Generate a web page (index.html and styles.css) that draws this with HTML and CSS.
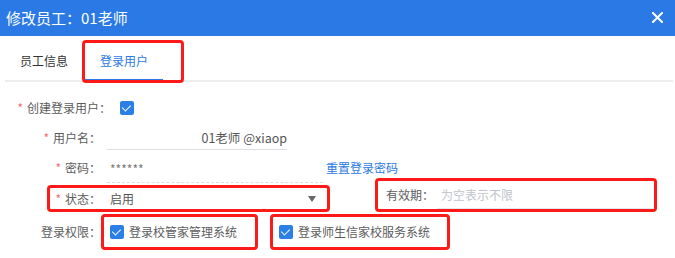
FILE: index.html
```html
<!DOCTYPE html>
<html lang="zh-CN">
<head>
    <meta charset="UTF-8">
    <meta name="viewport" content="width=device-width, initial-scale=1.0">
    <title>修改员工</title>
    <link rel="stylesheet" href="styles.css">
</head>
<body>
    <div class="dialog">
        <div class="dialog-header">
            <span class="dialog-title">修改员工：01老师</span>
            <span class="dialog-close">
                <svg width="11" height="11" viewBox="0 0 11 11">
                    <path d="M1 1L10 10M10 1L1 10" stroke="#ffffff" stroke-width="2" stroke-linecap="square"/>
                </svg>
            </span>
        </div>

        <div class="tabs">
            <div class="tab">员工信息</div>
            <div class="tab tab-active">登录用户</div>
            <div class="mark mark-tab"></div>
        </div>

        <div class="form">
            <div class="row row-create">
                <label class="label label-wide required">创建登录用户：</label>
                <span class="checkbox"></span>
            </div>

            <div class="row row-name">
                <label class="label required">用户名：</label>
                <div class="input input-name">01老师 @xiaop</div>
            </div>

            <div class="row row-pass">
                <label class="label required">密码：</label>
                <div class="input input-pass">******</div>
                <a class="link" href="#">重置登录密码</a>
            </div>

            <div class="row row-status">
                <div class="box box-status">
                    <label class="label label-status required">状态：</label>
                    <div class="select">
                        <span>启用</span>
                        <span class="caret"></span>
                    </div>
                </div>
                <div class="box box-expire">
                    <label class="label label-expire">有效期：</label>
                    <div class="input input-expire">为空表示不限</div>
                </div>
            </div>

            <div class="row row-perm">
                <label class="label">登录权限：</label>
                <div class="box box-check box-check-1">
                    <span class="checkbox"></span>
                    <span class="check-text">登录校管家管理系统</span>
                </div>
                <div class="box box-check box-check-2">
                    <span class="checkbox"></span>
                    <span class="check-text">登录师生信家校服务系统</span>
                </div>
            </div>
        </div>
    </div>
</body>
</html>
```

FILE: styles.css
```css
* {
    margin: 0;
    padding: 0;
    box-sizing: border-box;
}

body {
    font-family: "Noto Sans CJK SC", "Noto Sans", sans-serif;
    background: #ffffff;
    color: #5c5c5c;
    font-size: 12px;
}

.dialog {
    width: 675px;
    height: 258px;
    overflow: hidden;
}

.dialog-header {
    height: 36px;
    background: #2a79e4;
    display: flex;
    align-items: center;
    justify-content: space-between;
    padding: 0 12px 0 6px;
}

.dialog-title {
    color: #ffffff;
    font-size: 15px;
    line-height: 20px;
}

.dialog-close {
    display: flex;
    margin-top: -2px;
}

.tabs {
    position: relative;
    display: flex;
    gap: 2px;
    margin: 0 2px 0 5px;
    border-bottom: 2px solid #eeeeee;
}

.tab {
    padding: 15px 15px 9px;
    line-height: 20px;
    color: #333333;
    font-size: 12px;
}

.tab-active {
    color: #2a79e4;
    box-shadow: inset 0 -2px 0 #2a79e4;
    margin-bottom: -1px;
}

.mark {
    position: absolute;
    border: 3px solid #ff1a1a;
    border-radius: 4px;
}

.mark-tab {
    left: 77px;
    top: 4px;
    width: 102px;
    height: 43px;
}

.form {
    padding-top: 13px;
}

.row {
    display: flex;
    align-items: center;
}

.label {
    width: 101px;
    text-align: right;
    line-height: 20px;
    white-space: nowrap;
    color: #5c5c5c;
}

.required::before {
    content: "*";
    color: #f56c6c;
    margin-right: 4px;
}

.label-wide {
    width: 111px;
}

.row-create {
    height: 26px;
}

.checkbox {
    width: 14px;
    height: 14px;
    border-radius: 2px;
    background: #2d7fe8;
    position: relative;
    flex-shrink: 0;
}

.checkbox::after {
    content: "";
    position: absolute;
    left: 4px;
    top: 2px;
    width: 4px;
    height: 7px;
    border: solid #ffffff;
    border-width: 0 1.5px 1.5px 0;
    transform: rotate(45deg);
}

.row-create .checkbox {
    margin-left: 9px;
}

.row-name {
    height: 26px;
    margin-top: 4px;
}

.input {
    margin-left: 6px;
    line-height: 20px;
}

.input-name {
    width: 180px;
    height: 22px;
    text-align: right;
    color: #555555;
    font-size: 12.5px;
    border-bottom: 1px solid #dcdfe6;
    margin-top: 2px;
}

.row-pass {
    height: 26px;
    margin-top: 4px;
}

.input-pass {
    width: 216px;
    height: 24px;
    padding: 0 3px;
    color: #777777;
    border-bottom: 1px dashed #dddddd;
    margin-top: 5px;
}

.link {
    margin-left: 3px;
    color: #2a79e4;
    text-decoration: none;
    line-height: 20px;
}

.row-status {
    align-items: flex-end;
    margin-top: -3px;
    gap: 45px;
}

.box {
    display: flex;
    align-items: center;
    border: 3px solid #ff1a1a;
    border-radius: 4px;
}

.box-status {
    margin-left: 47px;
    width: 283px;
    height: 27px;
}

.label-status {
    width: 51px;
}

.select {
    width: 218px;
    margin-left: 6px;
    padding: 0 9px 0 3px;
    display: flex;
    align-items: center;
    justify-content: space-between;
    line-height: 20px;
    color: #555555;
}

.caret {
    width: 0;
    height: 0;
    border-left: 4px solid transparent;
    border-right: 4px solid transparent;
    border-top: 6px solid #666666;
}

.box-expire {
    width: 282px;
    height: 34px;
    padding: 0 0 0 8px;
    align-items: flex-end;
}

.label-expire {
    width: auto;
    padding-bottom: 4px;
}

.input-expire {
    flex: 1;
    margin-left: 3px;
    padding: 0 4px 3px;
    color: #c0c4cc;
    border-bottom: 1px solid #e4e7ed;
}

.row-perm {
    margin-top: 2px;
}

.box-check {
    height: 36px;
    padding-left: 6px;
}

.box-check .checkbox {
    margin-right: 5px;
}

.box-check-1 {
    width: 157px;
}

.box-check-2 {
    width: 180px;
    margin-left: 12px;
}

.check-text {
    line-height: 20px;
    color: #5c5c5c;
    white-space: nowrap;
}
```
